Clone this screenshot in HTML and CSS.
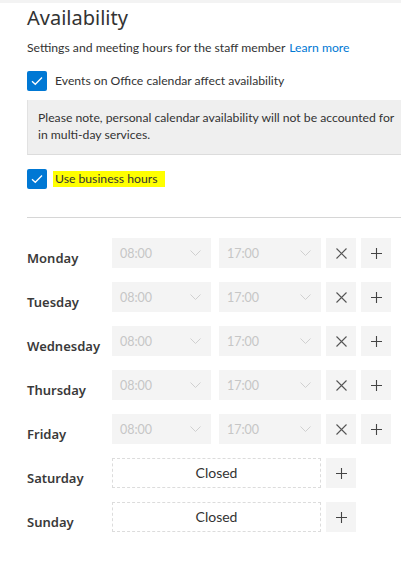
FILE: index.html
```html
<!DOCTYPE html>
<html>
<head>
<meta charset="utf-8">
<link rel="stylesheet" href="styles.css">
</head>
<body>
<div class="topbar"></div>
<main class="content">
  <h1 class="title">Availability</h1>
  <p class="subtitle">Settings and meeting hours for the staff member <a class="link" href="#">Learn more</a></p>
  <label class="check-row">
    <span class="checkbox"><svg width="12" height="10" viewBox="0 0 12 10"><path d="M1 5.2 L4.3 8.3 L11 1.5" fill="none" stroke="#fff" stroke-width="1.3"/></svg></span>
    <span class="check-text">Events on Office calendar affect availability</span>
  </label>
  <div class="note">Please note, personal calendar availability will not be accounted for in multi-day services.</div>
  <label class="check-row check-row-2">
    <span class="checkbox"><svg width="12" height="10" viewBox="0 0 12 10"><path d="M1 5.2 L4.3 8.3 L11 1.5" fill="none" stroke="#fff" stroke-width="1.3"/></svg></span>
    <span class="check-text highlight">Use business hours</span>
  </label>
  <hr class="divider">
  <div class="days">
    <div class="day">
      <div class="day-label">Monday</div>
      <div class="select s1"><span>08:00</span><svg class="chev" width="11" height="6" viewBox="0 0 11 6"><path d="M0.5 0.5 L5.5 5.5 L10.5 0.5" fill="none" stroke="#d0d0d0" stroke-width="1"/></svg></div>
      <div class="select s2"><span>17:00</span><svg class="chev" width="11" height="6" viewBox="0 0 11 6"><path d="M0.5 0.5 L5.5 5.5 L10.5 0.5" fill="none" stroke="#d0d0d0" stroke-width="1"/></svg></div>
      <div class="btn btn-x"><svg width="11" height="11" viewBox="0 0 11 11"><path d="M0.5 0.5 L10.5 10.5 M10.5 0.5 L0.5 10.5" stroke="#555" stroke-width="1.1"/></svg></div>
      <div class="btn"><svg width="11" height="11" viewBox="0 0 11 11"><path d="M5.5 0 V11 M0 5.5 H11" stroke="#444" stroke-width="1.1"/></svg></div>
    </div>
    <div class="day">
      <div class="day-label">Tuesday</div>
      <div class="select s1"><span>08:00</span><svg class="chev" width="11" height="6" viewBox="0 0 11 6"><path d="M0.5 0.5 L5.5 5.5 L10.5 0.5" fill="none" stroke="#d0d0d0" stroke-width="1"/></svg></div>
      <div class="select s2"><span>17:00</span><svg class="chev" width="11" height="6" viewBox="0 0 11 6"><path d="M0.5 0.5 L5.5 5.5 L10.5 0.5" fill="none" stroke="#d0d0d0" stroke-width="1"/></svg></div>
      <div class="btn btn-x"><svg width="11" height="11" viewBox="0 0 11 11"><path d="M0.5 0.5 L10.5 10.5 M10.5 0.5 L0.5 10.5" stroke="#555" stroke-width="1.1"/></svg></div>
      <div class="btn"><svg width="11" height="11" viewBox="0 0 11 11"><path d="M5.5 0 V11 M0 5.5 H11" stroke="#444" stroke-width="1.1"/></svg></div>
    </div>
    <div class="day">
      <div class="day-label">Wednesday</div>
      <div class="select s1"><span>08:00</span><svg class="chev" width="11" height="6" viewBox="0 0 11 6"><path d="M0.5 0.5 L5.5 5.5 L10.5 0.5" fill="none" stroke="#d0d0d0" stroke-width="1"/></svg></div>
      <div class="select s2"><span>17:00</span><svg class="chev" width="11" height="6" viewBox="0 0 11 6"><path d="M0.5 0.5 L5.5 5.5 L10.5 0.5" fill="none" stroke="#d0d0d0" stroke-width="1"/></svg></div>
      <div class="btn btn-x"><svg width="11" height="11" viewBox="0 0 11 11"><path d="M0.5 0.5 L10.5 10.5 M10.5 0.5 L0.5 10.5" stroke="#555" stroke-width="1.1"/></svg></div>
      <div class="btn"><svg width="11" height="11" viewBox="0 0 11 11"><path d="M5.5 0 V11 M0 5.5 H11" stroke="#444" stroke-width="1.1"/></svg></div>
    </div>
    <div class="day">
      <div class="day-label">Thursday</div>
      <div class="select s1"><span>08:00</span><svg class="chev" width="11" height="6" viewBox="0 0 11 6"><path d="M0.5 0.5 L5.5 5.5 L10.5 0.5" fill="none" stroke="#d0d0d0" stroke-width="1"/></svg></div>
      <div class="select s2"><span>17:00</span><svg class="chev" width="11" height="6" viewBox="0 0 11 6"><path d="M0.5 0.5 L5.5 5.5 L10.5 0.5" fill="none" stroke="#d0d0d0" stroke-width="1"/></svg></div>
      <div class="btn btn-x"><svg width="11" height="11" viewBox="0 0 11 11"><path d="M0.5 0.5 L10.5 10.5 M10.5 0.5 L0.5 10.5" stroke="#555" stroke-width="1.1"/></svg></div>
      <div class="btn"><svg width="11" height="11" viewBox="0 0 11 11"><path d="M5.5 0 V11 M0 5.5 H11" stroke="#444" stroke-width="1.1"/></svg></div>
    </div>
    <div class="day">
      <div class="day-label">Friday</div>
      <div class="select s1"><span>08:00</span><svg class="chev" width="11" height="6" viewBox="0 0 11 6"><path d="M0.5 0.5 L5.5 5.5 L10.5 0.5" fill="none" stroke="#d0d0d0" stroke-width="1"/></svg></div>
      <div class="select s2"><span>17:00</span><svg class="chev" width="11" height="6" viewBox="0 0 11 6"><path d="M0.5 0.5 L5.5 5.5 L10.5 0.5" fill="none" stroke="#d0d0d0" stroke-width="1"/></svg></div>
      <div class="btn btn-x"><svg width="11" height="11" viewBox="0 0 11 11"><path d="M0.5 0.5 L10.5 10.5 M10.5 0.5 L0.5 10.5" stroke="#555" stroke-width="1.1"/></svg></div>
      <div class="btn"><svg width="11" height="11" viewBox="0 0 11 11"><path d="M5.5 0 V11 M0 5.5 H11" stroke="#444" stroke-width="1.1"/></svg></div>
    </div>
    <div class="day">
      <div class="day-label">Saturday</div>
      <div class="closed">Closed</div>
      <div class="btn"><svg width="11" height="11" viewBox="0 0 11 11"><path d="M5.5 0 V11 M0 5.5 H11" stroke="#444" stroke-width="1.1"/></svg></div>
    </div>
    <div class="day">
      <div class="day-label">Sunday</div>
      <div class="closed">Closed</div>
      <div class="btn"><svg width="11" height="11" viewBox="0 0 11 11"><path d="M5.5 0 V11 M0 5.5 H11" stroke="#444" stroke-width="1.1"/></svg></div>
    </div>
  </div>
</main>
</body>
</html>
```

FILE: styles.css
```css
html, body {
  margin: 0;
  padding: 0;
  background: #fff;
  overflow: hidden;
}
body {
  font-family: "Lato", "Noto Sans", sans-serif;
  color: #333;
  width: 401px;
}
.topbar {
  height: 3px;
  background: #f3f3f3;
}
.content {
  padding-left: 27px;
}
.title {
  margin: 0;
  font-family: "Noto Sans", sans-serif;
  font-size: 20px;
  font-weight: 400;
  line-height: 28px;
  padding-top: 1px;
  color: #333;
}
.subtitle {
  margin: 0;
  margin-top: 7px;
  font-size: 12.2px;
  line-height: 18px;
  color: #333;
}
.link {
  color: #0078d4;
  text-decoration: none;
  margin-left: 1px;
}
.check-row {
  display: flex;
  align-items: center;
  margin-top: 14px;
  height: 20px;
}
.checkbox {
  width: 20px;
  height: 20px;
  background: #0078d4;
  border-radius: 2px;
  display: flex;
  align-items: center;
  justify-content: center;
  flex: none;
}
.check-text {
  margin-left: 8px;
  font-size: 12.2px;
  line-height: 16px;
}
.highlight {
  background: #ffff00;
  margin-left: 6px;
  padding: 0 8px 0 2px;
}
.note {
  margin-top: 9px;
  background: #efefef;
  border-left: 1px solid #e2e2e2;
  border-bottom: 1px solid #dcdcdc;
  width: 390px;
  box-sizing: border-box;
  padding: 9px 18px 9px 10px;
  font-size: 12.2px;
  line-height: 17px;
  height: 55px;
}
.check-row-2 {
  margin-top: 14px;
}
.divider {
  margin: 28px 0 0 0;
  border: 0;
  border-top: 1px solid #d6d6d6;
  height: 0;
}
.days {
  margin-top: 20px;
  display: flex;
  flex-direction: column;
  gap: 14px;
}
.day {
  display: flex;
  height: 30px;
}
.day-label {
  width: 85px;
  font-family: "Noto Sans", sans-serif;
  font-size: 13px;
  font-weight: 600;
  line-height: 18px;
  padding-top: 11px;
  color: #3a3a3a;
  flex: none;
}
.select {
  background: #f4f4f4;
  height: 30px;
  display: flex;
  align-items: center;
  justify-content: space-between;
  padding: 0 8px 0 8px;
  box-sizing: border-box;
  font-size: 12.5px;
  color: #c6c6c6;
  flex: none;
}
.s1 { width: 99px; margin-right: 8px; }
.s2 { width: 102px; margin-right: 5px; }
.chev { margin-right: 2px; }
.btn {
  width: 30px;
  height: 30px;
  background: #f4f4f4;
  display: flex;
  align-items: center;
  justify-content: center;
  flex: none;
}
.btn-x { margin-right: 5px; }
.closed {
  width: 209px;
  height: 30px;
  box-sizing: border-box;
  border: 1px dashed #dcdcdc;
  display: flex;
  align-items: center;
  justify-content: center;
  font-size: 14px;
  color: #333;
  margin-right: 5px;
  padding-bottom: 2px;
  flex: none;
}
```
